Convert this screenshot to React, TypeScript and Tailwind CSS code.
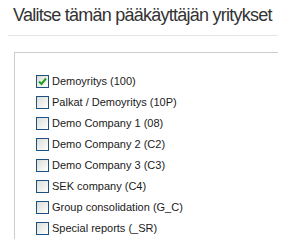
const COMPANIES = [
  { label: 'Demoyritys (100)', checked: true },
  { label: 'Palkat / Demoyritys (10P)', checked: false },
  { label: 'Demo Company 1 (08)', checked: false },
  { label: 'Demo Company 2 (C2)', checked: false },
  { label: 'Demo Company 3 (C3)', checked: false },
  { label: 'SEK company (C4)', checked: false },
  { label: 'Group consolidation (G_C)', checked: false },
  { label: 'Special reports (_SR)', checked: false },
];

function Box({ checked }: { checked: boolean }) {
  return (
    <span className="flex h-[13px] w-[13px] shrink-0 items-center justify-center border border-[#1c5180] bg-gradient-to-br from-[#dcdcd7] to-[#ffffff]">
      {checked && (
        <svg width="9" height="9" viewBox="0 0 9 9">
          <path d="M1 4.5 L3.5 7 L8 1.5" fill="none" stroke="#21a121" strokeWidth="2" />
        </svg>
      )}
    </span>
  );
}

export default function App() {
  return (
    <div className="h-[243px] w-[299px] overflow-hidden bg-white font-['Liberation_Sans',sans-serif]">
      <h1 className="pl-[13px] pt-[3px] text-[18px] leading-[24px] tracking-[-0.75px] text-[#333]">
        Valitse tämän pääkäyttäjän yritykset
      </h1>
      <div className="mx-[8px] mt-[8px] w-[270px] border-t border-[#e5e5e5]" />
      <div className="ml-[14px] mt-[16px] w-[264px] border-l border-t border-[#cccccc] pl-[21px] pt-[18px]">
        <ul className="flex flex-col">
          {COMPANIES.map(({ label, checked }) => (
            <li key={label} className="flex h-[21px] items-center gap-[3px]">
              <Box checked={checked} />
              <span className="whitespace-nowrap text-[11px] text-[#1a1a1a]">{label}</span>
            </li>
          ))}
        </ul>
      </div>
    </div>
  );
}
